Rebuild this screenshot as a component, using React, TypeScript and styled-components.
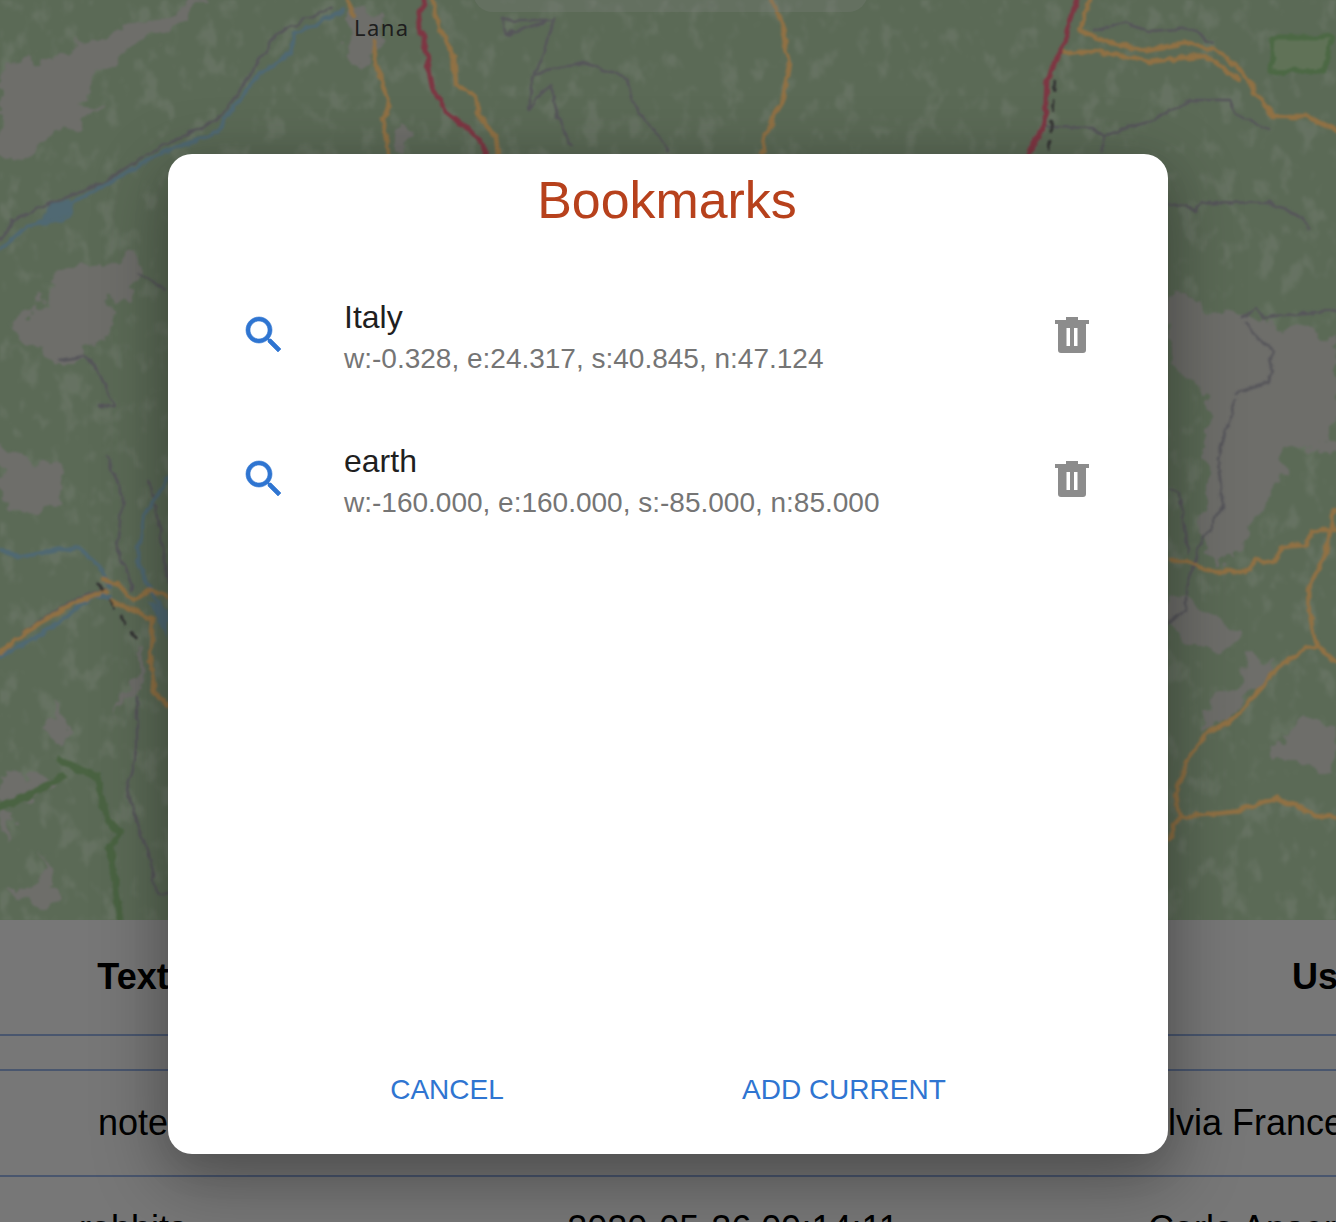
import React from "react";
import styled, { createGlobalStyle } from "styled-components";

const Global = createGlobalStyle`
  html, body { margin: 0; padding: 0; background: #c6c6c6; }
  body { font-family: "Liberation Sans", Arial, sans-serif; }
`;

const Page = styled.div`
  position: relative;
  width: 1336px;
  height: 1222px;
  overflow: hidden;
`;

const MapFrame = styled.div`
  position: relative;
  width: 1336px;
  height: 920px;
  overflow: hidden;
  background: #98b190;
`;

const MapSvg = styled.svg`
  display: block;
  width: 1336px;
  height: 920px;
`;

const MapToolbar = styled.div`
  position: absolute;
  top: -10px;
  left: 473px;
  width: 395px;
  height: 22px;
  border-radius: 0 0 20px 20px;
  background: rgba(225, 225, 225, 0.22);
`;

const DataTable = styled.table`
  width: 1464px;
  table-layout: fixed;
  border-collapse: collapse;
  background: #c6c6c6;
  color: #000;
  font-size: 36px;
`;

const HeadCell = styled.th`
  height: 114px;
  padding: 0;
  font-weight: 700;
  text-align: center;
  border-bottom: 2px solid #7a8fb8;
`;

const SpacerCell = styled.td`
  height: 33px;
  padding: 0;
  border-bottom: 2px solid #7a8fb8;
`;

const BodyCell = styled.td`
  height: 104px;
  padding: 0;
  text-align: center;
  white-space: nowrap;
  border-bottom: 2px solid #7a8fb8;
`;

const UserName = styled.span`
  display: inline-block;
  margin: 0 -90px;
`;

const Overlay = styled.div`
  position: absolute;
  inset: 0;
  background: rgba(0, 0, 0, 0.4);
`;

const Dialog = styled.section`
  position: absolute;
  left: 168px;
  top: 154px;
  width: 1000px;
  height: 1000px;
  display: flex;
  flex-direction: column;
  box-sizing: border-box;
  background: #fff;
  border-radius: 24px;
  box-shadow: 0 22px 70px 6px rgba(0, 0, 0, 0.3), 0 12px 40px 0 rgba(0, 0, 0, 0.08);
`;

const Title = styled.h2`
  margin: 0;
  padding-right: 2px;
  height: 92px;
  line-height: 92px;
  font-size: 51.9px;
  font-weight: 400;
  text-align: center;
  color: #b7411c;
`;

const List = styled.ul`
  flex: 1;
  list-style: none;
  margin: 0;
  padding: 17px 72px 0;
`;

const Row = styled.li`
  display: flex;
  align-items: center;
  height: 144px;
`;

const IconButton = styled.button`
  display: flex;
  flex: none;
  width: 48px;
  height: 48px;
  padding: 0;
  border: 0;
  background: none;
`;

const RowText = styled.div`
  flex: 1;
  margin-left: 56px;
  padding-top: 4px;
`;

const RowName = styled.div`
  font-size: 32px;
  line-height: 44px;
  color: #1f1f1f;
`;

const RowBounds = styled.div`
  font-size: 28px;
  line-height: 40px;
  color: #757575;
`;

const Actions = styled.div`
  display: flex;
  justify-content: space-evenly;
  padding-bottom: 32px;
`;

const ActionButton = styled.button`
  padding: 12px 16px;
  border: 0;
  background: none;
  font-family: inherit;
  font-size: 28px;
  line-height: 40px;
  color: #2f75d1;
`;

const SearchIcon = () => (
  <svg width="48" height="48" viewBox="0 0 24 24" fill="#2f75d1" stroke="#2f75d1" strokeWidth="0.3">
    <path d="M15.5 14h-.79l-.28-.27C15.41 12.59 16 11.11 16 9.5 16 5.91 13.09 3 9.5 3S3 5.91 3 9.5 5.91 16 9.5 16c1.61 0 3.09-.59 4.23-1.57l.27.28v.79l5 4.99L20.49 19l-4.99-5zm-6 0C7.01 14 5 11.99 5 9.5S7.01 5 9.5 5 14 7.01 14 9.5 11.99 14 9.5 14z" />
  </svg>
);

const TrashIcon = () => (
  <svg width="48" height="48" viewBox="0 0 48 48" fill="#8c8c8c">
    <path d="M18 6h12v3h11v4H7V9h11z" />
    <path
      fillRule="evenodd"
      d="M10 13h28v26a3 3 0 0 1-3 3H13a3 3 0 0 1-3-3zM18.5 17v18H22V17zM26 17v18h3.5V17z"
    />
  </svg>
);

type Pts = number[][];
const pts = (p: Pts) => p.map((c) => c.join(",")).join(" ");
const upper = (p: Pts): Pts => p.map(([x, y]) => [x, Math.round(y * 0.782)]);

const grayAreas: Pts[] = [
  upper([[209,0],[187,26],[162,47],[128,64],[102,102],[81,124],[102,136],[64,166],[21,209],[0,200],[0,102],[26,72],[55,81],[98,43],[158,21],[187,0]]),
  upper([[136,328],[145,354],[115,383],[111,422],[89,452],[51,464],[13,426],[0,405],[43,392],[51,354],[94,337]]),
  [[0,443],[20,457],[57,463],[63,490],[33,513],[10,510],[0,497]],
  [[1168,290],[1225,315],[1336,335],[1336,445],[1289,450],[1273,497],[1233,557],[1209,557],[1199,533],[1209,503],[1209,400],[1168,350]],
  [[1169,590],[1189,600],[1233,627],[1226,653],[1199,647],[1169,633]],
  [[1236,687],[1249,657],[1273,667],[1253,693],[1223,717],[1206,733],[1203,707]],
  [[1336,720],[1303,720],[1279,747],[1276,767],[1309,760],[1336,773]],
  [[0,773],[63,777],[33,800],[0,803]],
  [[0,813],[17,817],[3,843]],
  [[50,860],[33,887],[13,890],[40,913],[53,900]],
  [[140,650],[147,680],[137,695],[117,717],[123,695],[135,680]],
  [[50,700],[72,735],[60,745],[45,720]],
  upper([[345,10],[380,20],[385,60],[360,90],[345,60]]),
  upper([[395,160],[410,165],[412,195],[398,195]]),
];

const grayRoads: Pts[] = [
  upper([[332,9],[277,43],[256,85],[243,107],[222,149],[162,187],[102,234],[60,256],[13,281],[0,307]]),
  upper([[554,26],[503,26],[507,43],[545,28]]),
  upper([[554,23],[545,64],[533,94],[528,141],[550,107],[558,149],[571,187]]),
  upper([[533,94],[584,81],[626,98],[631,128],[652,162],[668,192]]),
  upper([[1094,40],[1124,30],[1150,40],[1192,36],[1213,55]]),
  upper([[1103,196],[1103,175],[1128,162],[1149,156],[1190,128],[1230,128],[1235,145],[1269,166]]),
  upper([[1047,162],[1094,164],[1103,175]]),
  upper([[1169,260],[1196,268],[1201,258],[1269,260],[1303,277],[1307,294]]),
  upper([[1243,405],[1256,392],[1265,405],[1336,396]]),
  upper([[1245,413],[1252,426],[1273,447],[1269,490],[1235,503]]),
  [[1236,400],[1226,427],[1218,460],[1223,507],[1199,547],[1186,587],[1186,610],[1169,623]],
  [[1169,490],[1179,493],[1186,533],[1188,553]],
  [[107,457],[123,497],[117,547],[133,590]],
  [[137,697],[137,750],[127,790],[147,850],[157,893],[168,893]],
  upper([[140,350],[165,370]]),
  upper([[60,460],[85,455],[100,480],[115,520],[100,520]]),
  [[150,480],[165,560],[168,580]],
  [[0,653],[30,628],[73,600],[107,590]],
];

const blueRoads: Pts[] = [
  upper([[343,13],[294,43],[290,68],[256,98],[222,158],[217,170],[162,196],[72,260],[68,277],[26,290],[0,320]]),
  [[0,550],[20,557],[77,547],[100,567],[110,587]],
  [[0,657],[43,633],[93,597],[110,597]],
  [[168,477],[143,517],[137,560],[147,583],[168,620]],
];

const orangeRoads: Pts[] = [
  upper([[432,0],[441,38],[454,72],[456,107],[475,124],[479,149],[496,175],[498,197]]),
  upper([[347,0],[354,21]]),
  upper([[373,53],[377,89],[390,136],[383,149],[388,197]]),
  upper([[772,0],[783,34],[789,85],[783,124],[764,175],[762,197]]),
  upper([[1090,0],[1079,38],[1111,55],[1145,64],[1188,55],[1222,68],[1243,94],[1273,149],[1307,149],[1336,166]]),
  upper([[1047,102],[1060,66],[1103,66],[1149,79],[1205,70],[1239,102]]),
  [[1169,560],[1189,560],[1199,567],[1216,572],[1246,572],[1256,560],[1273,563],[1283,547],[1306,545],[1313,530],[1336,530]],
  [[1334,510],[1326,553],[1308,590],[1309,613],[1318,647],[1306,648],[1279,667],[1256,693],[1236,717],[1206,733],[1186,763],[1176,793],[1179,817],[1168,840]],
  [[1318,647],[1336,662]],
  [[1179,817],[1233,812],[1276,798],[1316,815],[1336,817]],
  [[0,653],[30,630],[73,603],[107,592]],
  [[103,580],[117,583],[133,600],[150,590],[168,597]],
  [[110,600],[153,620],[150,660],[155,693],[168,705]],
];

const crimsonRoads: Pts[] = [
  upper([[424,0],[418,26],[426,64],[432,111],[447,145],[469,166],[484,187],[486,197]]),
  upper([[1077,0],[1064,55],[1047,102],[1045,158],[1028,196]]),
];

const greenRoads: Pts[] = [
  [[60,760],[97,777],[107,820],[120,833],[110,847],[120,920]],
  [[63,777],[27,797],[0,807]],
];

const dashedRoads: Pts[] = [
  upper([[1055,102],[1049,196]]),
  [[97,582],[137,640]],
];

const TerrainMap = () => (
  <MapSvg viewBox="0 0 1336 920">
    <defs>
      <filter id="mottle" x="0" y="0" width="100%" height="100%">
        <feTurbulence type="fractalNoise" baseFrequency="0.05 0.035" numOctaves="3" seed="7" />
        <feColorMatrix values="0 0 0 0 0.70  0 0 0 0 0.78  0 0 0 0 0.66  5 0 0 0 -2.7" />
        <feGaussianBlur stdDeviation="1" />
      </filter>
      <filter id="blotch" x="-5%" y="-5%" width="110%" height="110%">
        <feTurbulence type="fractalNoise" baseFrequency="0.045" numOctaves="3" seed="3" result="n" />
        <feDisplacementMap in="SourceGraphic" in2="n" scale="34" xChannelSelector="R" yChannelSelector="G" />
        <feGaussianBlur stdDeviation="1" />
      </filter>
      <filter id="wiggle" x="-5%" y="-5%" width="110%" height="110%">
        <feTurbulence type="fractalNoise" baseFrequency="0.09" numOctaves="2" seed="5" result="n" />
        <feDisplacementMap in="SourceGraphic" in2="n" scale="7" xChannelSelector="R" yChannelSelector="G" />
        <feGaussianBlur stdDeviation="0.8" />
      </filter>
    </defs>
    <rect width="1336" height="920" fill="#98b190" />
    <rect width="1336" height="920" filter="url(#mottle)" opacity="0.28" />
    <g filter="url(#blotch)">
      {grayAreas.map((p, i) => (
        <polygon key={i} points={pts(p)} fill="#b7b7b1" />
      ))}
    </g>
    <g filter="url(#wiggle)" fill="none" strokeLinejoin="round" strokeLinecap="round">
      <polygon points={pts(upper([[1273,47],[1332,47],[1324,89],[1271,92]]))} fill="#a0bf92" stroke="#7fae72" strokeWidth="5" />
      <polygon points={pts(upper([[50,260],[70,255],[72,272],[40,285]]))} fill="#85afc0" />
      <polygon points={pts([[147,600],[168,610],[168,640],[160,625]])} fill="#85afc0" />
      {greenRoads.map((p, i) => (
        <polyline key={i} points={pts(p)} stroke="#7ba56e" strokeWidth="7" />
      ))}
      {grayRoads.map((p, i) => (
        <polyline key={i} points={pts(p)} stroke="#8f8e96" strokeWidth="2.5" />
      ))}
      {blueRoads.map((p, i) => (
        <polyline key={i} points={pts(p)} stroke="#85afc0" strokeWidth="4" />
      ))}
      {orangeRoads.map((p, i) => (
        <polyline key={i} points={pts(p)} stroke="#f0bc72" strokeWidth="4.5" />
      ))}
      {crimsonRoads.map((p, i) => (
        <polyline key={i} points={pts(p)} stroke="#d25a70" strokeWidth="5" />
      ))}
      {dashedRoads.map((p, i) => (
        <polyline key={i} points={pts(p)} stroke="#555" strokeWidth="2.5" strokeDasharray="12 8" strokeLinecap="butt" />
      ))}
    </g>
    <text x="354" y="36" fontFamily="'Noto Sans', sans-serif" fontSize="22" letterSpacing="1.4" fill="#333">
      Lana
    </text>
  </MapSvg>
);

const bookmarks = [
  { name: "Italy", bounds: "w:-0.328, e:24.317, s:40.845, n:47.124" },
  { name: "earth", bounds: "w:-160.000, e:160.000, s:-85.000, n:85.000" },
];

const records = [
  { text: "note", date: "2020-05-26 09:20:03", user: "Silvia Francesconi Rossi" },
  { text: "rabbits", date: "2020-05-26 09:14:11", user: "Carla Anserini Colonna" },
];

export default function App() {
  return (
    <Page>
      <Global />
      <MapFrame>
        <TerrainMap />
        <MapToolbar />
      </MapFrame>
      <DataTable>
        <colgroup>
          <col style={{ width: 266 }} />
          <col style={{ width: 934 }} />
          <col style={{ width: 264 }} />
        </colgroup>
        <thead>
          <tr>
            <HeadCell>Text</HeadCell>
            <HeadCell>Date</HeadCell>
            <HeadCell>User</HeadCell>
          </tr>
        </thead>
        <tbody>
          <tr>
            <SpacerCell colSpan={3} />
          </tr>
          {records.map((r) => (
            <tr key={r.text}>
              <BodyCell>{r.text}</BodyCell>
              <BodyCell>{r.date}</BodyCell>
              <BodyCell>
                <UserName>{r.user}</UserName>
              </BodyCell>
            </tr>
          ))}
        </tbody>
      </DataTable>
      <Overlay />
      <Dialog>
        <Title>Bookmarks</Title>
        <List>
          {bookmarks.map((b) => (
            <Row key={b.name}>
              <IconButton aria-label="zoom">
                <SearchIcon />
              </IconButton>
              <RowText>
                <RowName>{b.name}</RowName>
                <RowBounds>{b.bounds}</RowBounds>
              </RowText>
              <IconButton aria-label="delete">
                <TrashIcon />
              </IconButton>
            </Row>
          ))}
        </List>
        <Actions>
          <ActionButton>CANCEL</ActionButton>
          <ActionButton>ADD CURRENT</ActionButton>
        </Actions>
      </Dialog>
    </Page>
  );
}
